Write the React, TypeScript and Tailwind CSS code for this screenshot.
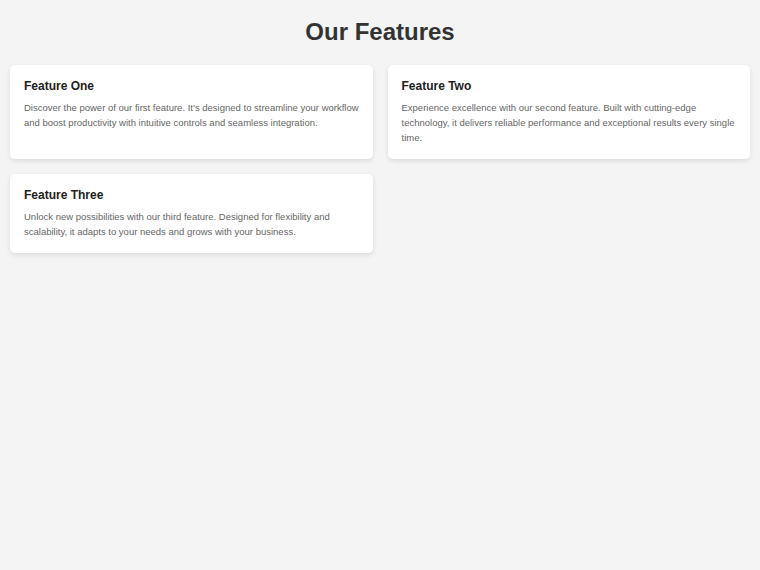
const features = [
  {
    title: 'Feature One',
    text: 'Discover the power of our first feature. It’s designed to streamline your workflow and boost productivity with intuitive controls and seamless integration.',
  },
  {
    title: 'Feature Two',
    text: 'Experience excellence with our second feature. Built with cutting-edge technology, it delivers reliable performance and exceptional results every single time.',
  },
  {
    title: 'Feature Three',
    text: 'Unlock new possibilities with our third feature. Designed for flexibility and scalability, it adapts to your needs and grows with your business.',
  },
];

const App = () => {
  return (
    <div className="min-h-screen bg-[#f4f4f4] px-[10px] pt-[18px] font-['Liberation_Sans',Arial,sans-serif]">
      <h1 className="text-center text-[24px] leading-[28px] font-bold text-[#333]">
        Our Features
      </h1>

      <div className="mt-[19px] grid grid-cols-2 gap-[15px]">
        {features.map((feature) => (
          <div
            key={feature.title}
            className="rounded-[5px] bg-white pl-[14px] pr-[12px] py-[14px] shadow-[0_2px_5px_rgba(0,0,0,0.1)]"
          >
            <h3 className="text-[12px] leading-[14px] font-bold text-[#222]">
              {feature.title}
            </h3>
            <p className="mt-[7px] text-[9.5px] leading-[15px] text-[#666]">
              {feature.text}
            </p>
          </div>
        ))}
      </div>
    </div>
  );
};

export default App;
